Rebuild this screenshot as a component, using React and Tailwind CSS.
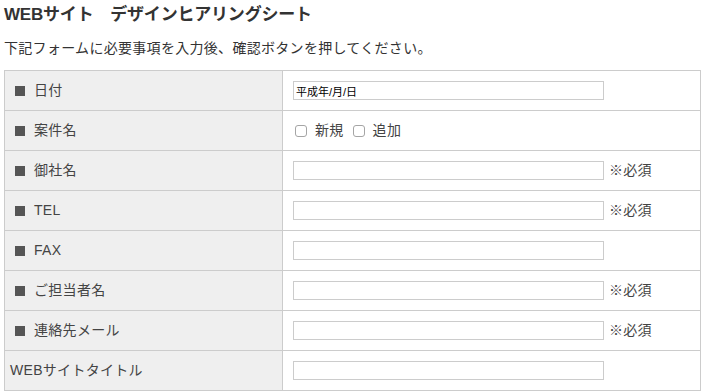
const rows = [
  { label: '日付', mark: true, kind: 'date' },
  { label: '案件名', mark: true, kind: 'check' },
  { label: '御社名', mark: true, kind: 'text', required: true },
  { label: 'TEL', mark: true, kind: 'text', required: true },
  { label: 'FAX', mark: true, kind: 'text' },
  { label: 'ご担当者名', mark: true, kind: 'text', required: true },
  { label: '連絡先メール', mark: true, kind: 'text', required: true },
  { label: 'WEBサイトタイトル', mark: false, kind: 'text' },
];

const fontStack = { fontFamily: '"Liberation Sans", "Noto Sans CJK JP", sans-serif' };

function Checkbox({ label }) {
  return (
    <label className="flex items-center">
      <input
        type="checkbox"
        className="m-0 h-[12px] w-[12px] appearance-none rounded-[3px] border border-[#a5a5a5] bg-white"
      />
      <span className="ml-[8px]">{label}</span>
    </label>
  );
}

function FieldRow({ row }) {
  return (
    <div className="flex h-[40px] border-b border-[#cccccc]">
      <div
        className={`flex w-[278px] items-center border-r border-[#cccccc] bg-[#efefef] ${
          row.mark ? 'pl-[10px]' : 'pl-[5px]'
        }`}
      >
        {row.mark && <span className="mr-[9px] inline-block h-[10px] w-[10px] bg-[#555555]" />}
        <span>{row.label}</span>
      </div>
      <div className="flex flex-1 items-center pl-[10px]">
        {row.kind === 'date' && (
          <input
            type="text"
            readOnly
            defaultValue="平成年/月/日"
            className="h-[19px] w-[311px] border border-[#cccccc] bg-white px-[2px] text-[11px] leading-none tracking-normal text-black outline-none"
          />
        )}
        {row.kind === 'check' && (
          <div className="flex items-center gap-[9px] pl-[2px]">
            <Checkbox label="新規" />
            <Checkbox label="追加" />
          </div>
        )}
        {row.kind === 'text' && (
          <input
            type="text"
            className="h-[19px] w-[311px] border border-[#cccccc] bg-white outline-none"
          />
        )}
        {row.required && <span className="ml-[5px]">※必須</span>}
      </div>
    </div>
  );
}

export default function App() {
  return (
    <div
      className="min-h-screen bg-white pl-[4px] pt-[3px] text-[14px] tracking-[0.3px] text-[#444444]"
      style={fontStack}
    >
      <h2 className="text-[17px] font-bold leading-[24px] tracking-[-0.2px] text-[#333333]">
        WEBサイト　デザインヒアリングシート
      </h2>
      <p className="mt-[9px] leading-[24px] text-[#333333]">
        下記フォームに必要事項を入力後、確認ボタンを押してください。
      </p>
      <div className="mt-[10px] w-[697px] border-x border-t border-[#cccccc]">
        {rows.map((row) => (
          <FieldRow key={row.label} row={row} />
        ))}
      </div>
    </div>
  );
}
